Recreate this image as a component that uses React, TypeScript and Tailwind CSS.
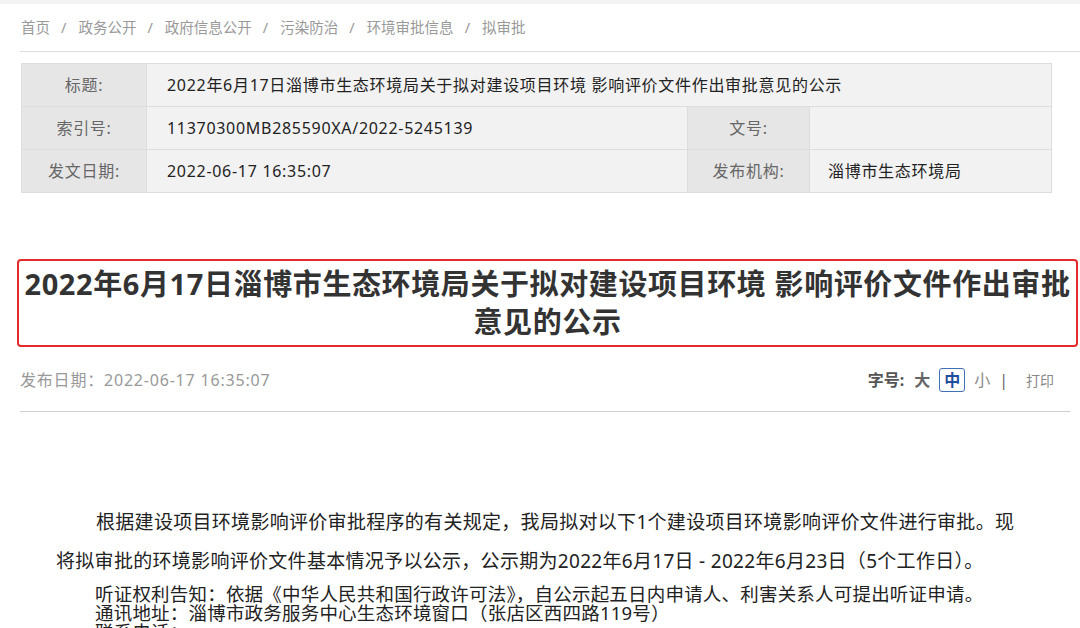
const font = { fontFamily: '"Noto Sans", "Noto Sans CJK SC", sans-serif' };

const crumbs = ['首页', '政务公开', '政府信息公开', '污染防治', '环境审批信息', '拟审批'];

export default function App() {
  return (
    <div className="w-[1080px] h-[628px] overflow-hidden bg-white text-[#333]" style={font}>
      <div className="h-[4px] bg-[#f3f3f3]" />

      {/* breadcrumb */}
      <div className="ml-[20px] h-[48px] flex items-center border-b border-[#dcdcdc] text-[14.5px] text-[#999]">
        {crumbs.map((c, i) => (
          <span key={c} className="flex items-center">
            {i > 0 && <span className="mx-[11px]">/</span>}
            <span className="ml-[1px]">{c}</span>
          </span>
        ))}
      </div>

      {/* info table */}
      <div className="mt-[11px] ml-[21px] w-[1031px] border border-[#dddddd] text-[16px] tracking-[0.7px]">
        <div className="flex h-[43px] border-b border-[#dddddd]">
          <div className="w-[124px] bg-[#e6e6e6] flex items-center justify-center text-[#666]">标题:</div>
          <div className="flex-1 bg-[#f2f2f2] border-l border-[#dddddd] flex items-center pl-[20px] text-[#222]">
            2022年6月17日淄博市生态环境局关于拟对建设项目环境 影响评价文件作出审批意见的公示
          </div>
        </div>
        <div className="flex h-[43px] border-b border-[#dddddd]">
          <div className="w-[124px] bg-[#e6e6e6] flex items-center justify-center text-[#666]">索引号:</div>
          <div className="w-[541px] bg-[#f2f2f2] border-l border-[#dddddd] flex items-center pl-[20px] text-[#222]">
            11370300MB285590XA/2022-5245139
          </div>
          <div className="w-[122px] bg-[#e6e6e6] border-l border-[#dddddd] flex items-center justify-center text-[#666]">文号:</div>
          <div className="flex-1 bg-[#f2f2f2] border-l border-[#dddddd]" />
        </div>
        <div className="flex h-[42px]">
          <div className="w-[124px] bg-[#e6e6e6] flex items-center justify-center text-[#666]">发文日期:</div>
          <div className="w-[541px] bg-[#f2f2f2] border-l border-[#dddddd] flex items-center pl-[20px] text-[#222]">
            2022-06-17 16:35:07
          </div>
          <div className="w-[122px] bg-[#e6e6e6] border-l border-[#dddddd] flex items-center justify-center text-[#666]">发布机构:</div>
          <div className="flex-1 bg-[#f2f2f2] border-l border-[#dddddd] flex items-center pl-[18px] text-[#222]">
            淄博市生态环境局
          </div>
        </div>
      </div>

      {/* title */}
      <div className="mt-[66px] ml-[17px] w-[1061px] h-[88px] border-2 border-[#e32b2b] rounded-[4px] flex items-center justify-center">
        <h1 className="text-center font-bold text-[29px] leading-[38px] tracking-[0.6px] text-[#333]">
          2022年6月17日淄博市生态环境局关于拟对建设项目环境 影响评价文件作出审批
          <br />
          意见的公示
        </h1>
      </div>

      {/* meta row */}
      <div className="ml-[20px] w-[1050px] h-[65px] flex items-center justify-between border-b border-[#cfcfcf] pt-[2px]">
        <span className="text-[16px] tracking-[0.8px] text-[#999]">发布日期：2022-06-17 16:35:07</span>
        <div className="flex items-center text-[16px] mr-[16px]">
          <span className="font-bold text-[#555]">字号:</span>
          <span className="ml-[10px] font-bold text-[#666]">大</span>
          <span className="ml-[9px] px-[4px] leading-[22px] border border-[#3f6fb5] rounded-[3px] font-bold text-[#1f4f9c]">中</span>
          <span className="ml-[9px] text-[#888]">小</span>
          <span className="ml-[9px] text-[#666]">|</span>
          <span className="ml-[18px] text-[#888] text-[14px]">打印</span>
        </div>
      </div>

      {/* body */}
      <div className="mt-[96px] text-[19px] text-[#222] tracking-[0.3px]">
        <p className="pl-[96px] leading-[28px]">
          根据建设项目环境影响评价审批程序的有关规定，我局拟对以下1个建设项目环境影响评价文件进行审批。现
        </p>
        <p className="mt-[11px] pl-[56px] leading-[28px]">
          将拟审批的环境影响评价文件基本情况予以公示，公示期为2022年6月17日 - 2022年6月23日（5个工作日）。
        </p>
        <div className="mt-[9px] pl-[95px] leading-[19px] text-[18.5px] tracking-[0.2px]">
          <p>听证权利告知：依据《中华人民共和国行政许可法》，自公示起五日内申请人、利害关系人可提出听证申请。</p>
          <p>通讯地址：淄博市政务服务中心生态环境窗口（张店区西四路119号）</p>
          <p>联系电话：</p>
        </div>
      </div>
    </div>
  );
}
